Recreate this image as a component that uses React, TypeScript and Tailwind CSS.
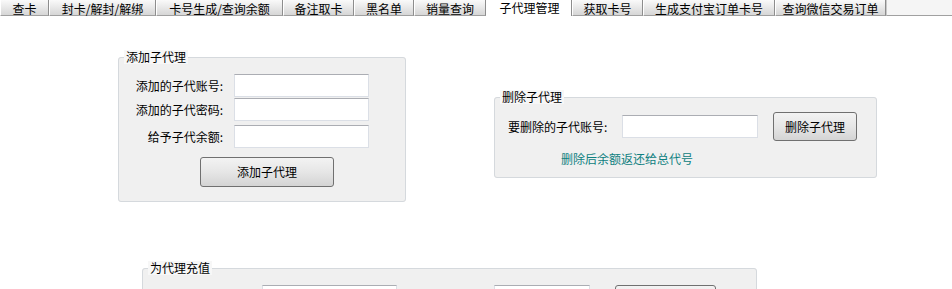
import React from 'react';

const tabs = [
  { label: '查卡', w: 'w-[49px]' },
  { label: '封卡/解封/解绑', w: 'w-[107px]' },
  { label: '卡号生成/查询余额', w: 'w-[127px]' },
  { label: '备注取卡', w: 'w-[71px]' },
  { label: '黑名单', w: 'w-[60px]' },
  { label: '销量查询', w: 'w-[72px]' },
  { label: '子代理管理', w: 'w-[86px]', active: true },
  { label: '获取卡号', w: 'w-[71px]' },
  { label: '生成支付宝订单卡号', w: 'w-[132px]' },
  { label: '查询微信交易订单', w: 'w-[111px]' },
];

const TextBox: React.FC<{ className?: string }> = ({ className = '' }) => (
  <input
    type="text"
    className={`h-[23px] bg-white border border-[#dbdfe6] border-t-[#abadb3] outline-none px-1 text-[12px] ${className}`}
  />
);

const WinButton: React.FC<{ children?: React.ReactNode; className?: string }> = ({ children, className = '' }) => (
  <button className={`flex items-center justify-center rounded-[3px] border border-[#707070] bg-gradient-to-b from-[#f3f3f3] via-[#e6e6e6] to-[#d4d4d4] text-[12px] text-black ${className}`}>
    {children}
  </button>
);

const GroupBox: React.FC<{ title: string; className?: string; children?: React.ReactNode }> = ({ title, className = '', children }) => (
  <fieldset className={`border border-[#d5d9dd] rounded-[3px] bg-[#f0f0f0] ${className}`}>
    <legend className="ml-[5px] px-[2px] leading-[14px] text-[12px] bg-[#f7f7f7]">{title}</legend>
    {children}
  </fieldset>
);

export default function App() {
  return (
    <div className="w-[952px] min-h-[289px] bg-white text-black text-[12px] font-['Noto_Sans_CJK_SC','Liberation_Sans',sans-serif]">
      {/* tab strip */}
      <div className="flex h-[16px]">
        {tabs.map((t) =>
          t.active ? (
            <div key={t.label} className={`${t.w} h-[16px] bg-white border-r border-[#8d8d8d] flex justify-center leading-[13px] pt-[1px]`}>
              <span className="pl-[2px]">{t.label}</span>
            </div>
          ) : (
            <div
              key={t.label}
              className={`${t.w} h-[16px] border-b border-[#a0a0a0] border-r border-r-[#8d8d8d] border-l border-l-white bg-gradient-to-b from-[#fafafa] to-[#d6d6d6] flex justify-center leading-[13px] pt-[2px]`}
            >
              {t.label}
            </div>
          )
        )}
        <div className="flex-1 h-[16px] bg-[#f5f5f5] border-b border-[#a0a0a0] border-l border-l-[#c8c8c8]" />
      </div>

      {/* first row */}
      <div className="flex items-start">
        <GroupBox title="添加子代理" className="ml-[118px] mt-[34px] w-[288px] h-[152px]">
          <div className="pt-[10px]">
            <div className="flex items-center h-[23px]">
              <span className="w-[104px] text-right">添加的子代账号:</span>
              <TextBox className="ml-[11px] w-[135px]" />
            </div>
            <div className="flex items-center h-[23px] mt-[1px]">
              <span className="w-[104px] text-right">添加的子代密码:</span>
              <TextBox className="ml-[11px] w-[135px]" />
            </div>
            <div className="flex items-center h-[23px] mt-[4px]">
              <span className="w-[104px] text-right">给予子代余额:</span>
              <TextBox className="ml-[11px] w-[135px]" />
            </div>
            <WinButton className="ml-[81px] mt-[9px] w-[134px] h-[30px]">添加子代理</WinButton>
          </div>
        </GroupBox>

        <GroupBox title="删除子代理" className="ml-[88px] mt-[74px] w-[383px] h-[88px]">
          <div className="pt-[8px]">
            <div className="flex items-center h-[29px] pl-[13px]">
              <span className="w-[114px]">要删除的子代账号:</span>
              <TextBox className="w-[136px]" />
              <WinButton className="ml-[15px] w-[84px] h-[29px]">删除子代理</WinButton>
            </div>
            <div className="mt-[11px] ml-[66px] leading-[14px] text-[#0e8080]">删除后余额返还给总代号</div>
          </div>
        </GroupBox>
      </div>

      {/* second row */}
      <GroupBox title="为代理充值" className="ml-[142px] mt-[59px] w-[615px] h-[90px]">
        <div className="pt-[10px] flex items-start">
          <TextBox className="ml-[119px] w-[135px]" />
          <TextBox className="ml-[97px] w-[96px]" />
          <WinButton className="ml-[25px] w-[101px] h-[25px]" />
        </div>
      </GroupBox>
    </div>
  );
}
